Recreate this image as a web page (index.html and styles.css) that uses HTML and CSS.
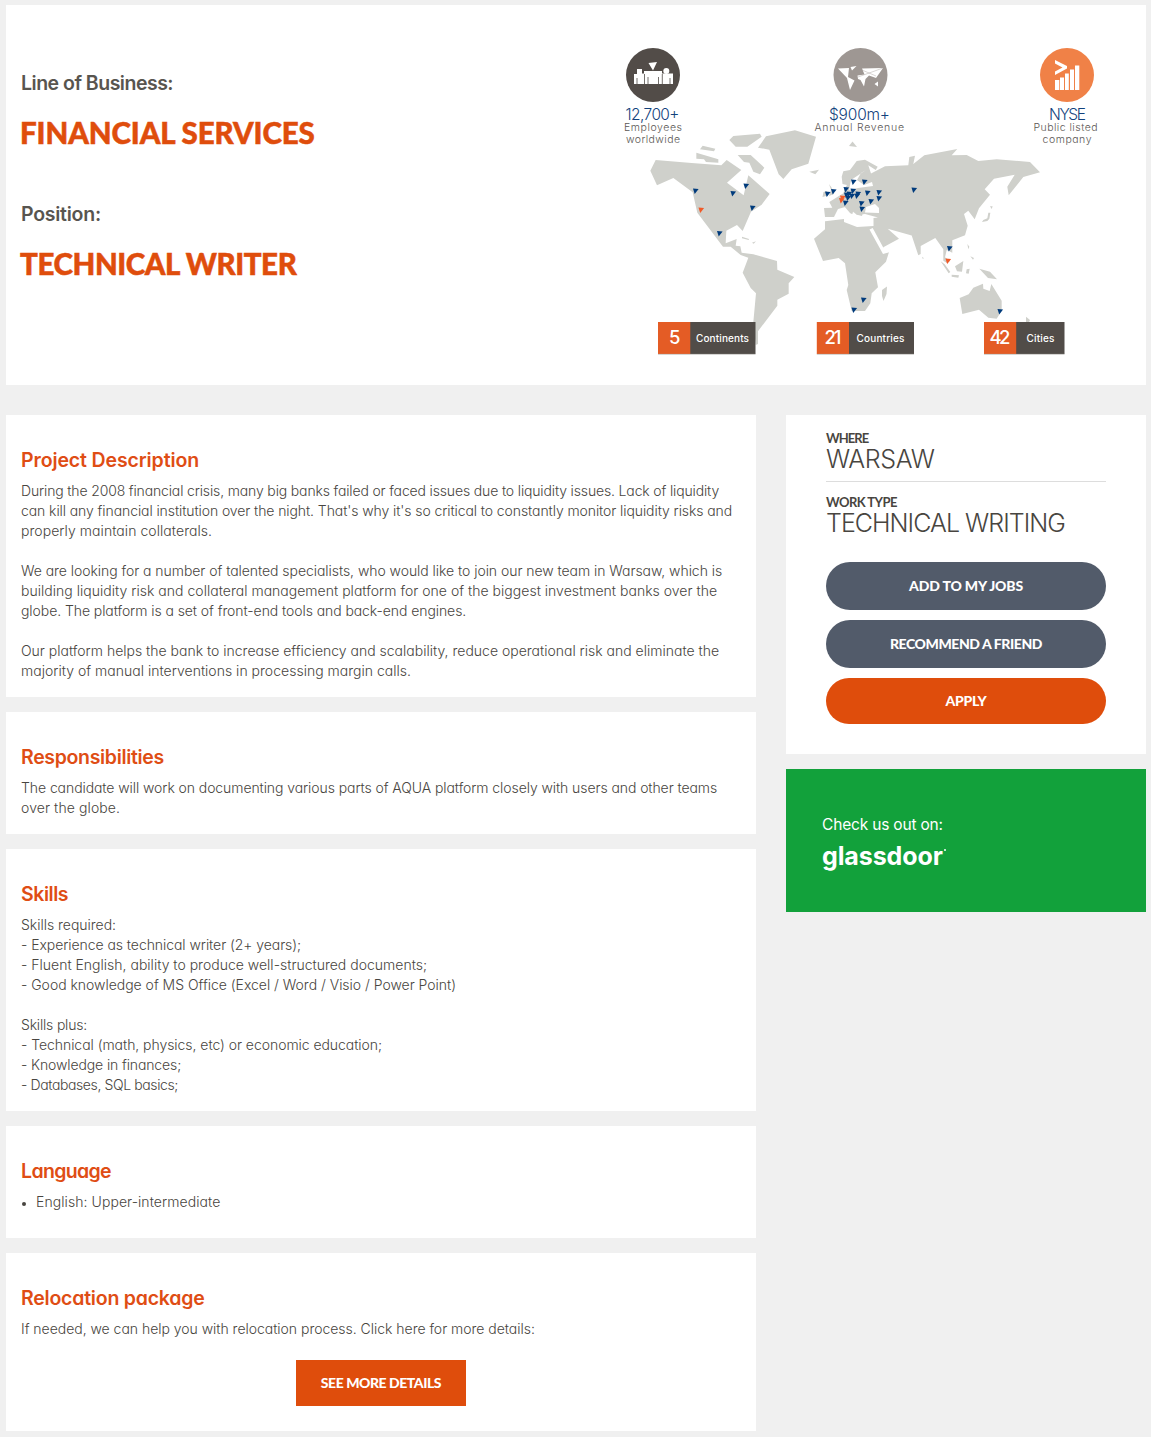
FILE: index.html
```
<!DOCTYPE html>
<html lang="en">
<head>
<meta charset="utf-8">
<title>Technical Writer</title>
<link rel="stylesheet" href="styles.css">
</head>
<body>
<header class="hero">
  <div class="hero-text">
    <p class="label"><span class="t-lob">Line of Business:</span></p>
    <h1 class="title"><span class="t-fin">FINANCIAL SERVICES</span></h1>
    <p class="label second"><span class="t-pos">Position:</span></p>
    <h1 class="title"><span class="t-tw">TECHNICAL WRITER</span></h1>
  </div>
  <svg class="map" viewBox="610 40 500 320" width="500" height="320">
    <g class="land">
      <g transform="translate(640 140) scale(.33333)">
        <path d="M47 60L155 69 244 76 260 60 304 90 261 128 311 166 325 106 389 162 365 194 333 215 308 273 291 255 259 272 257 310 290 297 287 317 301 319 305 338 340 343 411 363 412 389 463 411 446 430 446 461 412 479 412 497 354 574 354 612 347 615 340 546 348 460 332 444 308 398 325 353 302 345 272 320 249 320 172 218 158 157 100 114 51 136 31 92Z"/>
        <path d="M188 17L226 26 222 34 180 28ZM169 38L235 58 235 68 198 66 192 58 169 56ZM293 45L332 45 373 83 360 103 340 95 328 68 312 66ZM306 290L327 297 326 300 306 295ZM336 308L348 304 341 311Z"/>
      </g>
      <g transform="translate(610 40) scale(.33333)">
        <path d="M370 288L450 281 455 290 412 320 377 320 358 300ZM468 289L555 271 618 290 595 371 545 388 520 417 506 403 478 329 444 323ZM598 395L627 389 616 403Z"/>
      </g>
      <path d="M841.7 176.7L843.3 171.3 850 170 856.7 161 865 159.7 877.7 166.7 875.7 170 868.3 165.3 871 173.5 885 166.3 908.3 165.3 909.3 157 915 155.7 913.3 164 924.3 155.3 957.3 149 951.7 155.3 966.7 155 978.3 161 996.7 159.3 1030 162 1040 172.3 1023.3 177 1008.7 195.3 1007.3 186.7 1014.7 174.7 994 178.7 984.7 189.3 990 194.7 979 208.3 974.7 219.3 968.3 210.7 964 214 967.7 225.7 965 235.3 952.3 240.3 952.3 252.7 946.7 250 945 257.3 950 261 947 263 943.3 260.7 943.3 249.3 935.3 238 920.7 246 920.7 254 918.3 255.3 911.7 235.5 887.7 228.7 899 238.7 883.3 247.3 883 253 889 252 886 261.7 875.3 272.3 878 287.3 871.7 293.3 870.3 303.3 865 311 851.7 311 846.7 290 848.3 285 845 263.3 838.7 258 823 261 814 238.7 825 229.3 825 217 824 208 832.3 207.7 829.3 202 843.3 193.3 845 188 847 185 842.5 184Z"/>
      <path d="M829 184L831.5 187.5 834 194 829 196 831 190ZM823.5 192L827 191 826 196 822.5 197ZM882 290L887 286.5 886.5 294 883.5 301 882 296ZM849 146L852.5 141.5 857 147Z"/>
      <g transform="translate(900 140) scale(.33333)">
        <path d="M270 199L278 199 275 207ZM265 218L271 218 268 236 262 243 246 246 250 240 262 235ZM202 312L208 320 205 328ZM211 349L222 354 219 359ZM122 364L134 373 151 396 146 400ZM155 404L177 406 175 413 155 410ZM165 379L190 363 186 395 171 394ZM200 388L209 386 206 401 198 400ZM238 386L270 395 291 418 264 414ZM66 350L72 355 68 356ZM179 474L206 463 220 443 249 431 250 446 269 453 274 432 305 482 305 512 290 536 265 533 237 509 187 522ZM378 530L390 540 386 549 378 546Z"/>
      </g>
    </g>
    <g class="sea">
      <path d="M823 217L834 217 838 209 847 206.5 857 215 865 214 878 217.5 873.5 218 873.5 226 857 227 844 222 844 219 823 221.5Z"/>
      <path d="M869.5 229.5L872.7 228 883.5 248 890 252 883 254Z"/>
      <path d="M866 207L875 204 879 208 879 213 865 212.5ZM866 170L861 173 857 180 864 185 872 182 873 186 858 188 849 190 851 180Z"/>
    </g>
    <path class="land" d="M847 207L850 205.5 853.5 212 851 214ZM844 206L847 205 853 214 850 213ZM857 207L864 208 862 216 858 215Z"/>
    <defs><path id="pin" d="M-2.5-2.6L3.1-2-.8 2.9Z"/></defs>
    <g class="pins">
      <use href="#pin" x="695.5" y="191"/><use href="#pin" x="733" y="193.5"/><use href="#pin" x="746" y="186"/><use href="#pin" x="752.5" y="208"/><use href="#pin" x="719.5" y="233.5"/>
      <use href="#pin" x="827.5" y="194"/><use href="#pin" x="833.5" y="191.500"/><use href="#pin" x="853.5" y="182"/><use href="#pin" x="864.5" y="182"/><use href="#pin" x="846" y="189.500"/><use href="#pin" x="853" y="191"/><use href="#pin" x="858" y="194"/><use href="#pin" x="867.5" y="193"/><use href="#pin" x="879" y="192.500"/><use href="#pin" x="879" y="198.500"/><use href="#pin" x="871" y="201.500"/><use href="#pin" x="861.5" y="203.500"/><use href="#pin" x="862" y="209"/><use href="#pin" x="845.500" y="203"/><use href="#pin" x="846.500" y="195"/><use href="#pin" x="849" y="194"/><use href="#pin" x="848" y="198"/><use href="#pin" x="852" y="196"/><use href="#pin" x="857" y="196"/><use href="#pin" x="914" y="190"/>
      <use href="#pin" x="863.500" y="300"/><use href="#pin" x="854" y="310"/><use href="#pin" x="949.500" y="248.500"/><use href="#pin" x="1000" y="311.500"/>
    </g>
    <g class="pins hot"><use href="#pin" x="701" y="210"/><use href="#pin" x="842.500" y="198"/><use href="#pin" x="841.500" y="200.500"/><use href="#pin" x="948" y="261"/></g>

    <circle cx="653" cy="75" r="27" fill="#524c48"/>
    <g fill="#fff"><path d="M648.500 63L657 62 653 70.500ZM637 69H642V73.500H644V71H662V73.500H673V84H634V74H637Z"/><circle cx="666.300" cy="71" r="3"/></g>
    <path d="M644.500 74V84M662.300 74V84M648 77V84M658.500 77V84M637 78V84M670 78V84" stroke="#524c48" stroke-width=".8"/>
    <circle cx="860.500" cy="75" r="27" fill="#9e9793"/>
    <path fill="#fff" d="M838 68.500L849 68 848 77 854.500 80.500 850 90 847 78ZM850.500 67L856.500 66 852 70.500ZM862 68.500L883 68 876 78 869 75.500 865.500 79 864 86.500 860.500 80 858 79 857.500 75.500 864.500 74.500ZM874.500 84L878 81.500 878 86.500Z"/>
    <path d="M858 77L883 68M862 70L876 76" stroke="#9e9793" stroke-width=".4"/>
    <circle cx="1067" cy="75" r="27" fill="#f08147"/>
    <path fill="#fff" d="M1055 60L1067 66V68.500L1055 75V71.500L1062.500 67.500 1055 63.500ZM1055 80H1059.300V90H1055ZM1060 77.500H1064V90H1060ZM1065 73.500H1068.800V90H1065ZM1070 69.500H1074V90H1070ZM1075 65.500H1079.300V90H1075Z"/>
    <g class="stat">
      <text x="625.500" y="120" textLength="54">12,700+</text><text x="829" y="120" textLength="61">$900m+</text><text x="1049" y="120" textLength="37">NYSE</text>
    </g>
    <g class="caption">
      <text x="624" y="131" textLength="58">Employees</text><text x="626" y="143" textLength="54">worldwide</text><text x="814.500" y="131" textLength="89.500">Annual Revenue</text><text x="1033.500" y="131" textLength="64">Public listed</text><text x="1042.500" y="143" textLength="49">company</text>
    </g>
    <path fill="#514c48" d="M690 322H755.500V354H690ZM849 322H914V354H849ZM1016 322H1064.500V354H1016Z"/>
    <path fill="#e45c25" d="M658 322H690.300V354H658ZM816.800 322H849V354H816.800ZM984 322H1016.200V354H984Z"/>
    <path d="M658 354.300H755.500M816.800 354.300H914M984 354.300H1064.500" stroke="#aaa6a3" stroke-width=".6"/>
    <g class="count"><text x="669" y="344">5</text><text x="824.500" y="344" textLength="17">21</text><text x="989.500" y="344" textLength="21">42</text></g>
    <g class="unit"><text x="696" y="342" textLength="53">Continents</text><text x="856.500" y="342" textLength="48">Countries</text><text x="1026.500" y="341.500" textLength="28">Cities</text></g>
  </svg>
</header>
<div class="columns">
  <main class="main">
    <section class="card">
      <h2><span class="h-proj">Project Description</span></h2>
      <p><span class="d1">During the 2008 financial crisis, many big banks failed or faced issues due to liquidity issues. Lack of liquidity</span><br>
      <span class="d2">can kill any financial institution over the night. That's why it's so critical to constantly monitor liquidity risks and</span><br>
      <span class="d3">properly maintain collaterals.</span></p>
      <p><span class="d4">We are looking for a number of talented specialists, who would like to join our new team in Warsaw, which is</span><br>
      <span class="d5">building liquidity risk and collateral management platform for one of the biggest investment banks over the</span><br>
      <span class="d6">globe. The platform is a set of front-end tools and back-end engines.</span></p>
      <p><span class="d7">Our platform helps the bank to increase efficiency and scalability, reduce operational risk and eliminate the</span><br>
      <span class="d8">majority of manual interventions in processing margin calls.</span></p>
    </section>
    <section class="card">
      <h2><span class="h-resp">Responsibilities</span></h2>
      <p><span class="r1">The candidate will work on documenting various parts of AQUA platform closely with users and other teams</span><br>
      <span class="r2">over the globe.</span></p>
    </section>
    <section class="card">
      <h2><span class="h-skill">Skills</span></h2>
      <p><span class="s1">Skills required:</span><br>
      <span class="s2">- Experience as technical writer (2+ years);</span><br>
      <span class="s3">- Fluent English, ability to produce well-structured documents;</span><br>
      <span class="s4">- Good knowledge of MS Office (Excel / Word / Visio / Power Point)</span></p>
      <p><span class="s5">Skills plus:</span><br>
      <span class="s6">- Technical (math, physics, etc) or economic education;</span><br>
      <span class="s7">- Knowledge in finances;</span><br>
      <span class="s8">- Databases, SQL basics;</span></p>
    </section>
    <section class="card language">
      <h2><span class="h-lang">Language</span></h2>
      <ul><li><span class="l1">English: Upper-intermediate</span></li></ul>
    </section>
    <section class="card relocation">
      <h2><span class="h-rel">Relocation package</span></h2>
      <p><span class="p1">If needed, we can help you with relocation process. Click here for more details:</span></p>
      <a class="more"><span class="b-more">SEE MORE DETAILS</span></a>
    </section>
  </main>
  <aside class="side">
    <section class="summary">
      <dl>
        <div class="fact"><dt><span class="k1">WHERE</span></dt><dd><span class="v1">WARSAW</span></dd></div>
        <div class="fact"><dt><span class="k2">WORK TYPE</span></dt><dd><span class="v2">TECHNICAL WRITING</span></dd></div>
      </dl>
      <div class="actions">
        <a class="pill"><span class="b1">ADD TO MY JOBS</span></a>
        <a class="pill"><span class="b2">RECOMMEND A FRIEND</span></a>
        <a class="pill apply"><span class="b3">APPLY</span></a>
      </div>
    </section>
    <section class="glassdoor">
      <p class="check"><span class="g1">Check us out on:</span></p>
      <p class="brand"><span class="g2">glassdoor</span><i class="mark"></i></p>
    </section>
  </aside>
</div>
</body>
</html>
```
FILE: styles.css
```
* { box-sizing: border-box; }
body {
  margin: 0;
  padding: 5px 5px 6px 6px;
  background: #f0f0f0;
  color: #484540;
  font: 300 14px/20px Inter, "Open Sans", sans-serif;
  font-feature-settings: "cv11";
}
h1, h2, p, dl, dd, ul { margin: 0; }
span { white-space: nowrap; }

.hero {
  display: flex;
  justify-content: space-between;
  height: 380px;
  padding: 35px 36px 0 15px;
  background: #fff;
}
.hero-text { padding-top: 31px; }
.label { font-size: 19.5px; font-weight: 600; line-height: 24px; color: #58554f; }
.label.second { margin-top: 51px; }
.title {
  margin: 20px 0 0 -1px;
  font-family: Lato, sans-serif;
  font-size: 29.5px;
  font-weight: 900;
  line-height: 36px;
  color: #df4d0c;
  -webkit-text-stroke: .5px #df4d0c;
}

.map { flex: none; display: block; }
.land { fill: #cfd0cb; }
.sea { fill: #fff; }
.pins { fill: #003b7c; }
.pins.hot { fill: #f05a28; }
.stat { fill: #12427d; font-size: 15.5px; font-weight: 300; }
.caption { fill: #5b5754; font-size: 10.5px; font-weight: 300; }
.count { fill: #fff; font-size: 18.5px; font-weight: 500; }
.unit { fill: #fff; font-size: 10px; font-weight: 500; }

.columns { display: flex; align-items: flex-start; gap: 30px; margin-top: 30px; }
.main { display: flex; flex-direction: column; gap: 15px; width: 750px; }
.card { padding: 33px 15px 16px; background: #fff; }
.card h2 { margin-bottom: 9px; font-size: 19.5px; font-weight: 600; line-height: 24px; color: #df4d14; }
.card p + p { margin-top: 20px; }
.language { padding-bottom: 26px; }
.language ul { padding-left: 15px; list-style: disc; }
.language li::marker { font-size: 11px; }
.relocation { padding-bottom: 25px; }
.more {
  display: block;
  width: 170px;
  margin: 21px auto 0;
  background: #df4d0c;
  color: #fff;
  font-family: Lato, sans-serif;
  font-weight: 900;
  line-height: 46px;
  text-align: center;
}

.side { display: flex; flex-direction: column; gap: 15px; width: 360px; }
.summary { height: 339px; padding: 13px 40px 0; background: #fff; font-family: Lato, sans-serif; }
.fact { height: 53px; }
.fact + .fact { height: 69px; padding-top: 10px; border-top: 1px solid #ddd; }
.fact dt { font-size: 13px; font-weight: 700; line-height: 20px; }
.fact dd { font-family: Inter, sans-serif; font-size: 25px; line-height: 23px; }
.actions { display: flex; flex-direction: column; gap: 10px; margin-top: 12px; }
.pill {
  border-radius: 24px;
  background: #525b6a;
  color: #fff;
  font-weight: 900;
  line-height: 48px;
  text-align: center;
}
.apply { background: #df4d0c; line-height: 46px; }
.glassdoor { height: 143px; padding: 46px 36px 0; background: #12a13b; color: #fff; }
.check { font-size: 15.5px; font-weight: 400; }
.brand { display: flex; margin-top: 5px; font-size: 25px; font-weight: 700; line-height: 32px; font-feature-settings: normal; }
.mark { width: 2px; height: 2px; margin: 9px 0 0 1px; border-radius: 1px; background: #fff; }

/* Tracking per line */
.t-lob { letter-spacing: -.5px; }
.t-fin { letter-spacing: -.1px; }
.t-pos { letter-spacing: -.25px; }
.t-tw { letter-spacing: -.42px; }
.h-proj { letter-spacing: -.12px; }
.h-resp { letter-spacing: -.33px; }
.h-skill { letter-spacing: -.45px; }
.h-lang { letter-spacing: -.65px; }
.h-rel { letter-spacing: -.22px; }
.d1 { letter-spacing: -.15px; }
.d2 { letter-spacing: -.088px; }
.d3 { letter-spacing: .06px; }
.d4 { letter-spacing: -.05px; }
.d5 { letter-spacing: .02px; }
.d6 { letter-spacing: -.075px; }
.d7 { letter-spacing: -.002px; }
.d8 { letter-spacing: .015px; }
.r1 { letter-spacing: -.08px; }
.r2 { letter-spacing: .1px; }
.s1 { letter-spacing: -.02px; }
.s2 { letter-spacing: -.063px; }
.s3 { letter-spacing: .005px; }
.s4 { letter-spacing: -.025px; }
.s5 { letter-spacing: -.19px; }
.s6 { letter-spacing: -.05px; }
.s7 { letter-spacing: -.12px; }
.s8 { letter-spacing: -.39px; }
.l1 { letter-spacing: .07px; }
.p1 { letter-spacing: -.025px; }
.b-more { letter-spacing: -.45px; }
.k1 { letter-spacing: -.95px; }
.k2 { letter-spacing: -.55px; }
.v1 { letter-spacing: -.4px; }
.v2 { letter-spacing: -.97px; }
.b1 { letter-spacing: -.15px; }
.b2 { letter-spacing: -.42px; }
.b3 { letter-spacing: -.3px; }
.g1 { letter-spacing: -.18px; }
.g2 { letter-spacing: -.1px; }
```
